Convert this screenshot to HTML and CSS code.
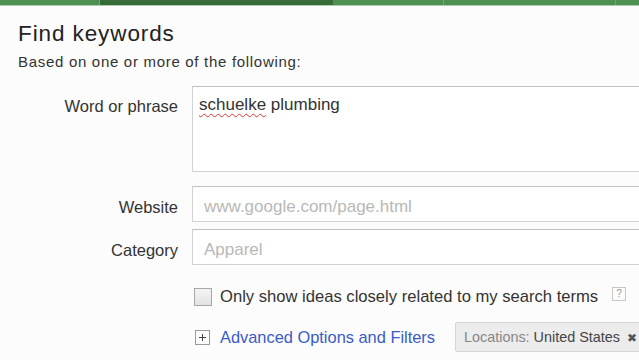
FILE: index.html
```html
<!DOCTYPE html>
<html lang="en">
<head>
  <meta charset="UTF-8">
  <title>Find keywords</title>
  <link rel="stylesheet" href="styles.css">
</head>
<body>
  <div class="topbar">
    <div class="seg seg-a"></div>
    <div class="seg seg-b"></div>
    <div class="seg seg-c"></div>
    <div class="seg seg-d"></div>
    <div class="seg seg-e"></div>
  </div>

  <div class="content">
    <h1>Find keywords</h1>
    <p class="sub">Based on one or more of the following:</p>

    <div class="form">
      <label class="label label-top">Word or phrase</label>
      <div class="field textarea"><span class="typo">schuelke</span> plumbing</div>

      <label class="label label-website">Website</label>
      <div class="field input input-website placeholder">www.google.com/page.html</div>

      <label class="label label-category">Category</label>
      <div class="field input input-category placeholder">Apparel</div>

      <div></div>
      <div class="check-row">
        <span class="checkbox"></span>
        <span>Only show ideas closely related to my search terms</span>
        <span class="help">?</span>
      </div>

      <div></div>
      <div class="adv-row">
        <span class="plus"></span>
        <a class="adv-link" href="#">Advanced Options and Filters</a>
        <span class="chip"><span class="chip-key">Locations:</span> United States <span class="chip-x">&#10006;</span></span>
      </div>
    </div>
  </div>
</body>
</html>
```

FILE: styles.css
```css
body {
  margin: 0;
  padding: 0;
  background: #fcfcfc;
  font-family: Arial, "Liberation Sans", sans-serif;
  color: #333;
  overflow: hidden;
}

/* green tab strip */
.topbar {
  display: flex;
  height: 5px;
  border-bottom: 1px solid #a9cfa9;
}

.seg {
  background: #4e8f52;
  border-right: 1px solid #6ea870;
}

.seg-a { width: 99px; }
.seg-b { width: 232px; background: #376b3a; border-right-color: #376b3a; }
.seg-c { width: 110px; }
.seg-d { width: 171px; }
.seg-e { flex: 1; border-right: none; }

.content {
  padding-left: 18px;
}

h1 {
  margin: 15px 0 0;
  font-size: 22.5px;
  letter-spacing: 0.9px;
  font-weight: normal;
  color: #222;
  line-height: 26px;
}

.sub {
  margin: 6px 0 0;
  font-size: 15px;
  letter-spacing: 0.7px;
  line-height: 18px;
  color: #333;
}

.form {
  display: grid;
  grid-template-columns: 160px 520px;
  column-gap: 14px;
  margin-top: 15px;
}

.label {
  align-self: start;
  text-align: right;
  font-size: 16.5px;
  line-height: 19px;
  color: #333;
  padding-top: 12px;
}

.label-top {
  padding-top: 11px;
}

.field {
  box-sizing: border-box;
  border: 1px solid #d2d2d2;
  border-top-color: #c0c0c0;
  background: #fff;
  font-size: 17px;
  line-height: 20px;
}

.textarea {
  height: 86px;
  padding: 8px 6px;
  color: #333;
}

.typo {
  text-decoration: underline wavy #d33;
  text-decoration-thickness: 1px;
  text-underline-offset: 3px;
}

.input {
  height: 36px;
  padding: 10px 11px 5px;
  color: #333;
}

.label-website,
.input-website {
  margin-top: 14px;
}

.label-category,
.input-category {
  margin-top: 7px;
}

.placeholder {
  color: #b8b8b8;
}

.check-row {
  display: flex;
  align-items: center;
  gap: 8px;
  margin-top: 22px;
  padding-left: 2px;
  font-size: 16.6px;
  color: #333;
}

.checkbox {
  width: 16px;
  height: 16px;
  border: 1px solid #a8a8a8;
  background: linear-gradient(#f4f4f4, #e2e2e2);
}

.help {
  align-self: flex-start;
  width: 12px;
  height: 12px;
  border: 1px solid #c8c8c8;
  font-size: 10px;
  line-height: 12px;
  text-align: center;
  color: #999;
  margin-left: 6px;
}

.adv-row {
  display: flex;
  align-items: center;
  margin-top: 15px;
  padding-left: 3px;
  font-size: 16.4px;
}

.plus {
  position: relative;
  width: 13px;
  height: 13px;
  border: 1px solid #9a9a9a;
  margin-right: 10px;
}

.plus::before,
.plus::after {
  content: "";
  position: absolute;
  background: #444;
}

.plus::before { left: 3px; top: 6px; width: 7px; height: 1px; }
.plus::after { left: 6px; top: 3px; width: 1px; height: 7px; }

.adv-link {
  color: #3a5bc7;
  text-decoration: none;
}

.chip {
  margin-left: 20px;
  padding: 0 8px;
  height: 28px;
  line-height: 28px;
  border: 1px solid #d6d6d6;
  border-radius: 2px;
  background: #ececec;
  font-size: 14.4px;
  color: #444;
  white-space: nowrap;
}

.chip-key {
  color: #888;
}

.chip-x {
  margin-left: 3px;
  color: #555;
  font-size: 12px;
}
```
